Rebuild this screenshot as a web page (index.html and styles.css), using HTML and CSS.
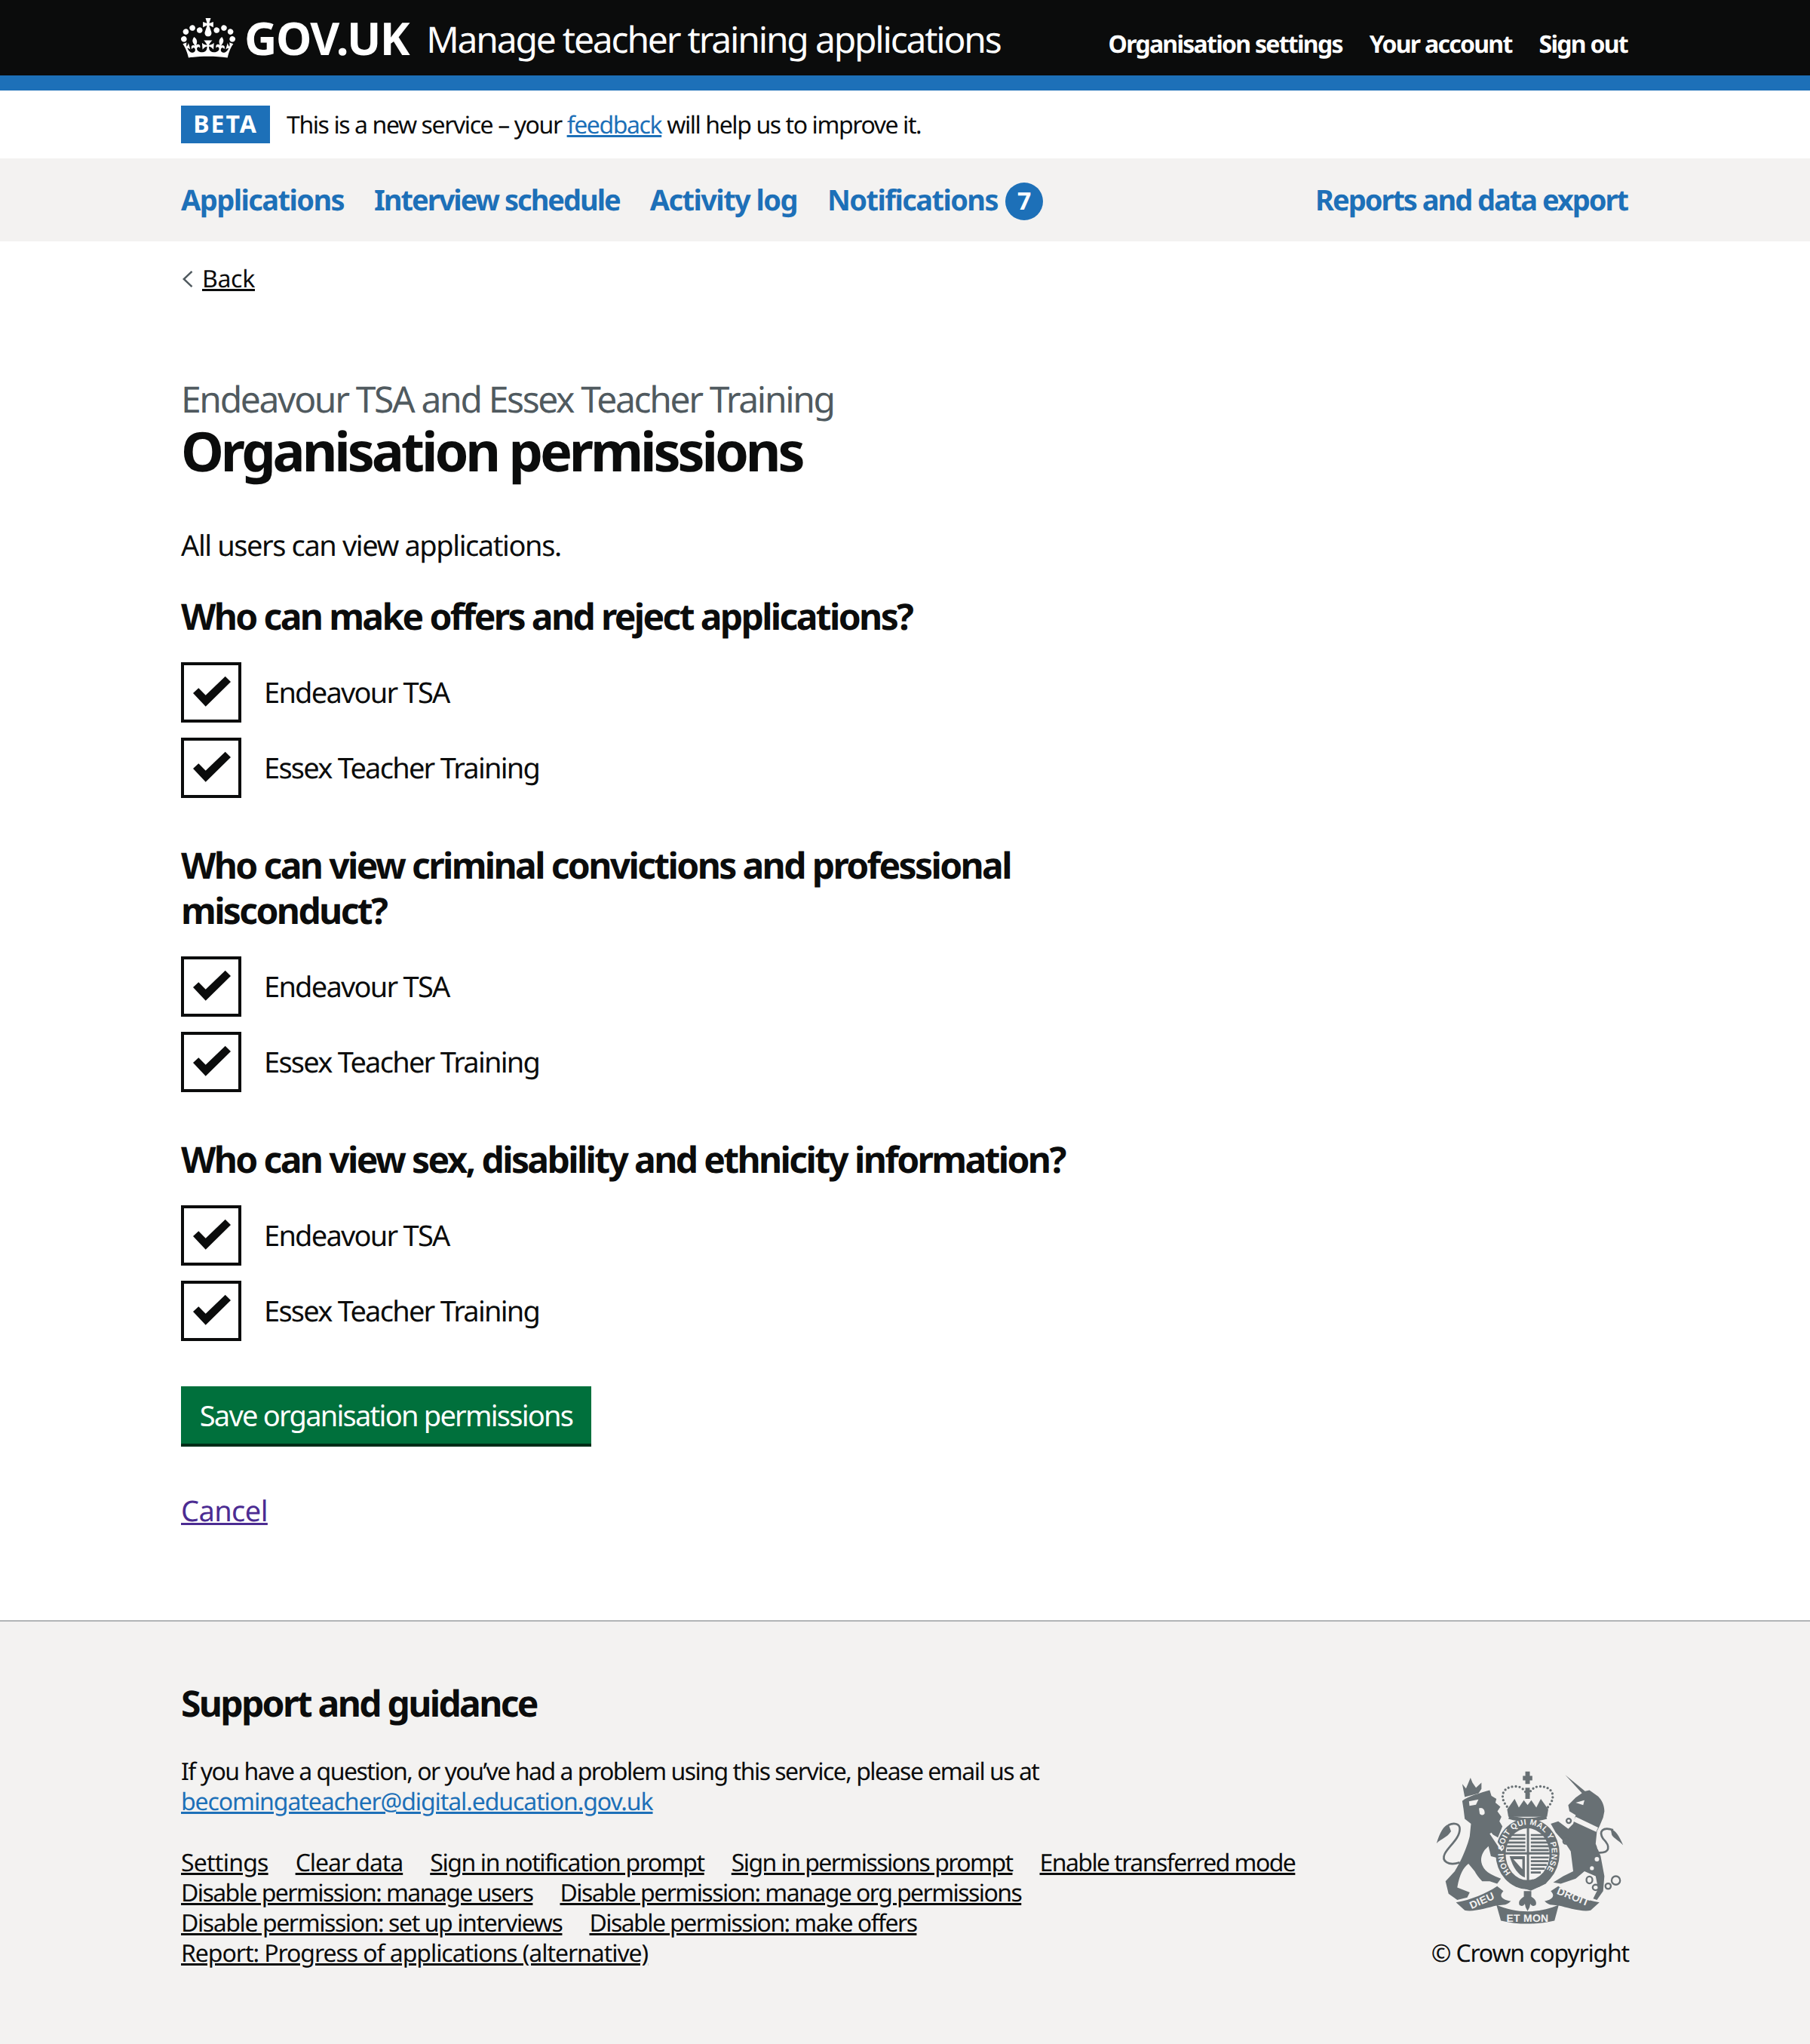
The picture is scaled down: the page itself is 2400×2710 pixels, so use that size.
FILE: index.html
```html
<!DOCTYPE html>
<html lang="en">
<head>
    <meta charset="UTF-8">
    <title>Organisation permissions</title>
    <link rel="stylesheet" href="styles.css">
</head>
<body>

    <header class="header">
        <div class="wrap header-row">
            <a class="logo" href="#">
                <svg class="crown" viewBox="0 0 132 97" aria-hidden="true"><path fill="currentColor" d="M25 30.2c3.5 1.5 7.7-.2 9.1-3.7 1.5-3.6-.2-7.8-3.9-9.2-3.6-1.4-7.6.3-9.1 3.9-1.4 3.5.3 7.5 3.9 9zM9 39.5c3.6 1.5 7.8-.2 9.2-3.7 1.5-3.6-.2-7.8-3.9-9.1-3.6-1.5-7.6.2-9.1 3.8-1.4 3.5.3 7.5 3.8 9zM4.4 57.2c3.5 1.5 7.7-.2 9.1-3.8 1.5-3.6-.2-7.7-3.9-9.1-3.5-1.5-7.6.3-9.1 3.8-1.4 3.5.3 7.6 3.9 9.1zm38.3-21.4c3.5 1.5 7.7-.2 9.1-3.8 1.5-3.6-.2-7.7-3.9-9.1-3.6-1.5-7.6.3-9.1 3.8-1.3 3.6.4 7.7 3.9 9.1zm64.4-5.6c-3.6 1.5-7.8-.2-9.1-3.7-1.5-3.6.2-7.8 3.8-9.2 3.6-1.4 7.7.3 9.2 3.9 1.3 3.5-.4 7.5-3.9 9zm15.9 9.3c-3.6 1.5-7.7-.2-9.1-3.7-1.5-3.6.2-7.8 3.7-9.1 3.6-1.5 7.7.2 9.2 3.8 1.5 3.5-.3 7.5-3.8 9zm4.7 17.7c-3.6 1.5-7.8-.2-9.2-3.8-1.5-3.6.2-7.7 3.9-9.1 3.6-1.5 7.7.3 9.2 3.8 1.3 3.5-.4 7.6-3.9 9.1zM89.3 35.8c-3.6 1.5-7.8-.2-9.2-3.8-1.4-3.6.2-7.7 3.9-9.1 3.6-1.5 7.7.3 9.2 3.8 1.4 3.6-.3 7.7-3.9 9.1zM69.7 17.7l8.9 4.7V9.3l-8.9 2.8c-.2-.3-.5-.6-.9-.9L72.4 0H59.6l3.5 11.2c-.3.3-.6.5-.9.9l-8.8-2.8v13.1l8.8-4.7c.3.3.6.7.9.9l-5 15.4v.1c-.2.8-.4 1.6-.4 2.4 0 4.1 3.1 7.5 7 8.1h.2c.3 0 .7.1 1 .1.4 0 .7 0 1-.1h.2c4-.6 7.1-4.1 7.1-8.1 0-.8-.1-1.7-.4-2.4V34l-5.1-15.4c.4-.2.7-.6 1-.9zM66 92.8c16.9 0 32.8 1.1 47.1 3.2 4-16.9 8.9-26.7 14-33.5l-9.6-3.4c1 4.9 1.1 7.2 0 10.2-1.5-1.4-3-4.3-4.2-8.7L108.6 76c2.8-2 5-3.2 7.5-3.3-4.4 9.4-10 11.9-13.6 11.2-4.3-.8-6.3-4.6-5.6-7.9 1-4.7 5.7-5.9 8-.5 4.3-8.7-3-11.4-7.6-8.8 7.1-7.2 7.9-13.5 2.1-21.1-8 6.1-8.1 12.3-4.5 20.8-4.7-5.4-12.1-2.5-9.5 6.2 3.4-5.2 7.9-2 7.2 3.1-.6 4.3-6.4 7.8-13.5 7.2-10.3-.9-10.9-8-11.2-13.8 2.5-.5 7.1 1.8 11 7.3L80.2 60c-4.1 4.4-8 5.3-12.3 5.4 1.4-4.4 8-11.6 8-11.6H55.5s6.4 7.2 7.9 11.6c-4.2-.1-8-1-12.3-5.4l1.4 16.4c3.9-5.5 8.5-7.7 10.9-7.3-.3 5.8-.9 12.8-11.1 13.8-7.2.6-12.9-2.9-13.5-7.2-.7-5 3.8-8.3 7.1-3.1 2.7-8.7-4.6-11.6-9.4-6.2 3.7-8.5 3.6-14.7-4.6-20.8-5.8 7.6-5 13.9 2.2 21.1-4.7-2.6-11.9.1-7.7 8.8 2.3-5.5 7.1-4.2 8.1.5.7 3.3-1.3 7.1-5.7 7.9-3.5.7-9-1.8-13.5-11.2 2.5.1 4.7 1.3 7.5 3.3l-4.7-15.4c-1.2 4.4-2.7 7.2-4.3 8.7-1.1-3-.9-5.3 0-10.2l-9.5 3.4c5 6.9 9.9 16.7 14 33.5 14.8-2.1 30.8-3.2 47.7-3.2z"/></svg>
                <span class="logo-text">GOV.UK</span>
            </a>
            <a class="service-name" href="#">Manage teacher training applications</a>
            <nav class="header-nav">
                <a href="#">Organisation settings</a>
                <a href="#">Your account</a>
                <a href="#">Sign out</a>
            </nav>
        </div>
    </header>

    <div class="wrap phase">
        <strong class="tag">BETA</strong>
        <span class="phase-text">This is a new service – your <a class="link" href="#">feedback</a> will help us to improve it.</span>
    </div>

    <nav class="primary-nav">
        <div class="wrap primary-row">
            <a href="#">Applications</a>
            <a class="tight" href="#">Interview schedule</a>
            <a href="#">Activity log</a>
            <a href="#">Notifications</a>
            <span class="badge">7</span>
            <a class="tight push-right" href="#">Reports and data export</a>
        </div>
    </nav>

    <main class="wrap main">
        <a class="back" href="#">
            <svg class="chevron" viewBox="0 0 14 22" aria-hidden="true"><path d="M12.500 .9 1.800 11l10.700 10.100" fill="none" stroke="#505a5f" stroke-width="2.500"/></svg>
            <span>Back</span>
        </a>

        <span class="caption">Endeavour TSA and Essex Teacher Training</span>
        <h1>Organisation permissions</h1>
        <p class="lead">All users can view applications.</p>

        <form>
            <fieldset>
                <h2>Who can make offers and reject applications?</h2>
                <label class="check"><span class="box"><svg viewBox="0 0 72 72"><polygon points="12,37 19.300,30.300 28.700,39.700 54.700,14.700 62,22 28.700,54.700"/></svg></span>Endeavour TSA</label>
                <label class="check"><span class="box"><svg viewBox="0 0 72 72"><polygon points="12,37 19.300,30.300 28.700,39.700 54.700,14.700 62,22 28.700,54.700"/></svg></span>Essex Teacher Training</label>
            </fieldset>

            <fieldset>
                <h2>Who can view criminal convictions and professional misconduct?</h2>
                <label class="check"><span class="box"><svg viewBox="0 0 72 72"><polygon points="12,37 19.300,30.300 28.700,39.700 54.700,14.700 62,22 28.700,54.700"/></svg></span>Endeavour TSA</label>
                <label class="check"><span class="box"><svg viewBox="0 0 72 72"><polygon points="12,37 19.300,30.300 28.700,39.700 54.700,14.700 62,22 28.700,54.700"/></svg></span>Essex Teacher Training</label>
            </fieldset>

            <fieldset>
                <h2>Who can view sex, disability and ethnicity information?</h2>
                <label class="check"><span class="box"><svg viewBox="0 0 72 72"><polygon points="12,37 19.300,30.300 28.700,39.700 54.700,14.700 62,22 28.700,54.700"/></svg></span>Endeavour TSA</label>
                <label class="check"><span class="box"><svg viewBox="0 0 72 72"><polygon points="12,37 19.300,30.300 28.700,39.700 54.700,14.700 62,22 28.700,54.700"/></svg></span>Essex Teacher Training</label>
            </fieldset>

            <button type="submit">Save organisation permissions</button>
        </form>

        <a class="cancel" href="#">Cancel</a>
    </main>

    <footer class="footer">
        <div class="wrap">
            <h2 class="footer-title">Support and guidance</h2>
            <div class="footer-row">
                <div class="footer-text">
                    <p>If you have a question, or you’ve had a problem using this service, please email us at<br><a class="link footer-mail" href="#">becomingateacher@digital.education.gov.uk</a></p>
                    <ul class="footer-links">
                        <li><a class="loose" href="#">Settings</a></li>
                        <li><a class="snug" href="#">Clear data</a></li>
                        <li><a class="mid" href="#">Sign in notification prompt</a></li>
                        <li><a href="#">Sign in permissions prompt</a></li>
                        <li><a href="#">Enable transferred mode</a></li>
                        <li><a href="#">Disable permission: manage users</a></li>
                        <li><a href="#">Disable permission: manage org permissions</a></li>
                        <li><a class="mid" href="#">Disable permission: set up interviews</a></li>
                        <li><a href="#">Disable permission: make offers</a></li>
                        <li><a class="snug" href="#">Report: Progress of applications (alternative)</a></li>
                    </ul>
                </div>
                <div class="copyright">
                    <svg class="crest" viewBox="130 75 755 620" aria-hidden="true">
                        <defs><path id="garter" d="M430 486A97 112 0 1 1 564 486"/></defs>
                        <g fill="#687074">
                            <!-- lion -->
                            <path d="M235 198C255 180 310 165 345 155L352 178 372 190 368 205 388 222 376 240 392 262 384 280 396 300 378 345 352 330 395 398 388 440 370 425 350 420 340 380 325 395C315 410 305 430 315 455 330 490 360 495 390 510L375 530 345 520 315 520C300 505 290 490 285 480L260 450C240 465 225 490 215 545L265 565 255 585 215 595 180 570 168 520 205 480C225 450 255 385 265 340L270 290 245 270 240 230Z"/>
                            <path d="M235 130 250 148 260 125 268 105 276 125 290 145 312 125 312 150 300 168 245 182Z"/>
                            <path d="M225 445C180 460 150 440 165 410 180 380 225 350 225 310 225 288 200 285 180 295" fill="none" stroke="#687074" stroke-width="8"/>
                            <path d="M180 292C160 298 145 325 132 368 150 350 175 345 190 320Z"/>
                            <!-- unicorn -->
                            <path d="M648 94 728 160 718 170Z"/>
                            <path d="M725 160 745 155 780 180C795 195 805 215 805 240L800 265 785 300 775 320 770 370 790 420 805 500 800 560 775 595 760 590 780 550 770 500 725 480 690 510 630 530 600 525 640 500 680 480 675 440 670 400 650 370 610 325 590 290 620 280 660 310 680 290 690 255 665 240 660 215 690 185Z"/>
                            <path d="M775 405C830 410 830 380 800 350 780 320 800 300 840 315" fill="none" stroke="#687074" stroke-width="8"/>
                            <path d="M830 310C850 315 865 340 880 375 860 355 845 350 835 335Z"/>
                            <!-- centre crown -->
                            <path d="M425 232C380 190 390 140 450 140 475 140 490 160 497 180 505 160 520 140 545 140 605 140 615 190 570 232" fill="none" stroke="#687074" stroke-width="10" stroke-linecap="round" stroke-dasharray="0 15"/>
                            <path d="M488 80H506V98H516V116H506V130H488V116H478V98H488Z"/>
                            <path d="M488 145H506V190H488ZM415 232 445 190 462 225 482 195 497 215 512 195 532 225 550 190 580 232 575 262H420Z"/>
                            <path d="M425 255C470 270 525 270 570 255L575 270C525 285 470 285 420 270Z"/>
                            <!-- shield -->
                            <ellipse cx="497" cy="410" rx="128" ry="142"/>
                            <ellipse cx="497" cy="412" rx="88" ry="104" fill="#f3f2f1"/>
                            <path d="M425 335H488M420 350H488M416 365H488M414 380H488M414 395H488M510 335H575M510 350H578M510 365H582M510 380H582M510 395H582M510 425H582M510 440H580M510 455H574M510 470H566M510 485H550" fill="none" stroke="#687074" stroke-width="8"/>
                            <path d="M425 420H486V505C460 495 440 470 425 420ZM440 432 476 472V445L476 432Z" fill-rule="evenodd"/>
                            <path d="M494 300H503V530H494ZM405 404H590V413H405Z"/>
                            <path d="M425 500 510 548 590 505 570 530 510 558 440 535Z"/>
                            <!-- motto ribbon -->
                            <path d="M210 605C270 595 330 570 375 540L400 560C380 580 395 595 430 600 420 610 410 615 400 615L372 618C340 625 280 645 245 637Z"/>
                            <path d="M785 605C725 595 665 570 620 540L590 560C610 580 595 595 565 600 575 610 585 615 595 615L622 618C655 625 715 645 750 637Z"/>
                            <path d="M372 615C450 650 545 650 622 615L605 678C530 695 460 695 390 678Z"/>
                            <!-- thistle -->
                            <path d="M482 560H512V582C525 590 535 600 530 615 520 625 510 615 508 610L505 625 497 640 489 625 486 610C484 615 474 625 464 615 459 600 469 590 482 582Z"/>
                        </g>
                        <g fill="#f3f2f1">
                            <path d="M262 200 300 192 290 213 264 218ZM302 228C315 222 326 232 325 248 320 258 308 255 305 250Z"/>
                            <path d="M345 330 352 325 398 395 392 400Z"/>
                            <path d="M690 262 780 305 772 322 680 280Z"/>
                            <path d="M690 205 725 195 720 215Z"/>
                            <circle cx="785" cy="385" r="9"/>
                            <circle cx="775" cy="432" r="9"/>
                            <circle cx="755" cy="468" r="8"/>
                            <text class="crest-letters" transform="translate(272 632) rotate(-24)">DIEU</text>
                            <text class="crest-letters" transform="translate(612 570) rotate(22)">DROIT</text>
                            <text class="crest-letters" x="412" y="682">ET MON</text>
                            <text class="garter-letters"><textPath href="#garter" textLength="490">HONI SOIT QUI MAL Y PENSE</textPath></text>
                        </g>
                        <g fill="none" stroke="#687074" stroke-width="7">
                            <ellipse cx="745" cy="515" rx="12" ry="14"/>
                            <ellipse cx="770" cy="545" rx="12" ry="11"/>
                            <ellipse cx="820" cy="540" rx="11" ry="11"/>
                            <ellipse cx="851" cy="517" rx="17" ry="17"/>
                            <circle cx="662" cy="278" r="9"/>
                            <circle cx="650" cy="360" r="10"/>
                        </g>
                    </svg>
                    <span class="copyright-text">© Crown copyright</span>
                </div>
            </div>
        </div>
    </footer>

</body>
</html>
```

FILE: styles.css
```css
* { box-sizing: border-box; }
body { margin: 0; font-family: "Noto Sans", Arial, sans-serif; font-size: 38px; line-height: 50px; letter-spacing: -.046em; text-rendering: geometricPrecision; color: #0b0c0c; background: #fff; }
h1, h2, p, ul { margin: 0; padding: 0; }
a { color: inherit; }
.wrap { width: 1920px; margin: 0 auto; }
.link { color: #1d70b8; }

/* header */
.header { height: 120px; background: #0b0c0c; border-bottom: 20px solid #1d70b8; color: #fff; }
.header-row { display: flex; align-items: center; height: 100px; white-space: nowrap; }
.header a { color: #fff; text-decoration: none; }
.logo { display: flex; align-items: center; gap: 12px; }
.crown { width: 72px; height: 53px; }
.logo-text { font-size: 60px; font-weight: 700; line-height: 60px; letter-spacing: -.025em; }
.service-name { margin: 6px 0 0 23px; font-size: 48px; letter-spacing: -.046em; }
.header-nav { display: flex; gap: 36px; margin-left: auto; padding: 18px 2px 0 0; font-size: 32px; font-weight: 700; letter-spacing: -.054em; }

/* beta banner */
.phase { display: flex; align-items: center; gap: 22px; height: 90px; font-size: 32px; letter-spacing: -.044em; }
.phase-text { margin-top: 2px; }
.tag { display: block; width: 118px; height: 50px; line-height: 50px; text-align: center; background: #1d70b8; color: #fff; letter-spacing: 2px; }

/* primary nav */
.primary-nav { background: #f3f2f1; }
.primary-row { display: flex; align-items: center; gap: 40px; height: 110px; padding-right: 2px; font-weight: 700; letter-spacing: -.041em; }
.primary-row a { margin-top: -1px; color: #1d70b8; text-decoration: none; }
.primary-row .tight { letter-spacing: -.053em; }
.badge { width: 50px; height: 50px; margin: 4px 0 0 -30px; border-radius: 50%; background: #1d70b8; color: #fff; font-size: 32px; line-height: 50px; text-align: center; letter-spacing: 0; }
.push-right { margin-left: auto; }

/* content */
.main { padding: 30px 0 120px; }
.back { display: flex; align-items: center; gap: 12px; height: 40px; margin-bottom: 110px; font-size: 32px; line-height: 40px; letter-spacing: -.01em; }
.back span { text-decoration: underline; }
.chevron { width: 14px; height: 22px; margin-left: 2px; }
.caption { display: block; font-size: 48px; line-height: 60px; letter-spacing: -.049em; color: #505a5f; }
h1 { font-size: 72px; line-height: 76px; font-weight: 700; letter-spacing: -.057em; margin-bottom: 62px; }
.lead { margin-bottom: 40px; letter-spacing: -.037em; }
fieldset { border: 0; margin: 0 0 60px; padding: 0; width: 1280px; }
h2 { font-size: 48px; line-height: 60px; font-weight: 700; letter-spacing: -.055em; margin-bottom: 30px; }
.check { display: flex; align-items: center; gap: 30px; height: 80px; margin-bottom: 20px; }
.check:last-child { margin-bottom: 0; }
.box { display: block; width: 80px; height: 80px; border: 4px solid #0b0c0c; }
.box svg { display: block; width: 72px; height: 72px; fill: #0b0c0c; }
button { display: block; width: 544px; height: 80px; padding: 0 0 4px; border: 0; border-radius: 0; background: #00703c; box-shadow: inset 0 -4px 0 #002d18; color: #fff; font: inherit; letter-spacing: -.046em; white-space: nowrap; }
.cancel { display: inline-block; margin-top: 60px; color: #4c2c92; letter-spacing: -.015em; }

/* footer */
.footer { height: 562px; padding-top: 79px; background: #f3f2f1; border-top: 2px solid #b1b4b6; font-size: 32px; line-height: 40px; }
.footer-title { line-height: 60px; margin-bottom: 40px; letter-spacing: -.056em; }
.footer-row { display: flex; justify-content: space-between; align-items: flex-end; }
.footer-text { width: 1560px; letter-spacing: -.047em; }
.footer-mail { letter-spacing: -.034em; }
.footer-links { display: flex; flex-wrap: wrap; column-gap: 36px; margin-top: 41px; list-style: none; letter-spacing: -.049em; }
.footer-links .loose { letter-spacing: -.024em; }
.footer-links .snug { letter-spacing: -.033em; }
.footer-links .mid { letter-spacing: -.044em; }
.copyright { display: flex; flex-direction: column; align-items: flex-end; gap: 18px; }
.copyright-text { letter-spacing: -.037em; }
.crest { display: block; width: 250px; height: 205px; margin-right: 6px; }
.crest-letters { font-family: "Liberation Sans", Arial, sans-serif; font-size: 42px; font-weight: 700; letter-spacing: 1px; }
.garter-letters { font-family: "Liberation Sans", Arial, sans-serif; font-size: 32px; font-weight: 700; letter-spacing: 0; }
```
